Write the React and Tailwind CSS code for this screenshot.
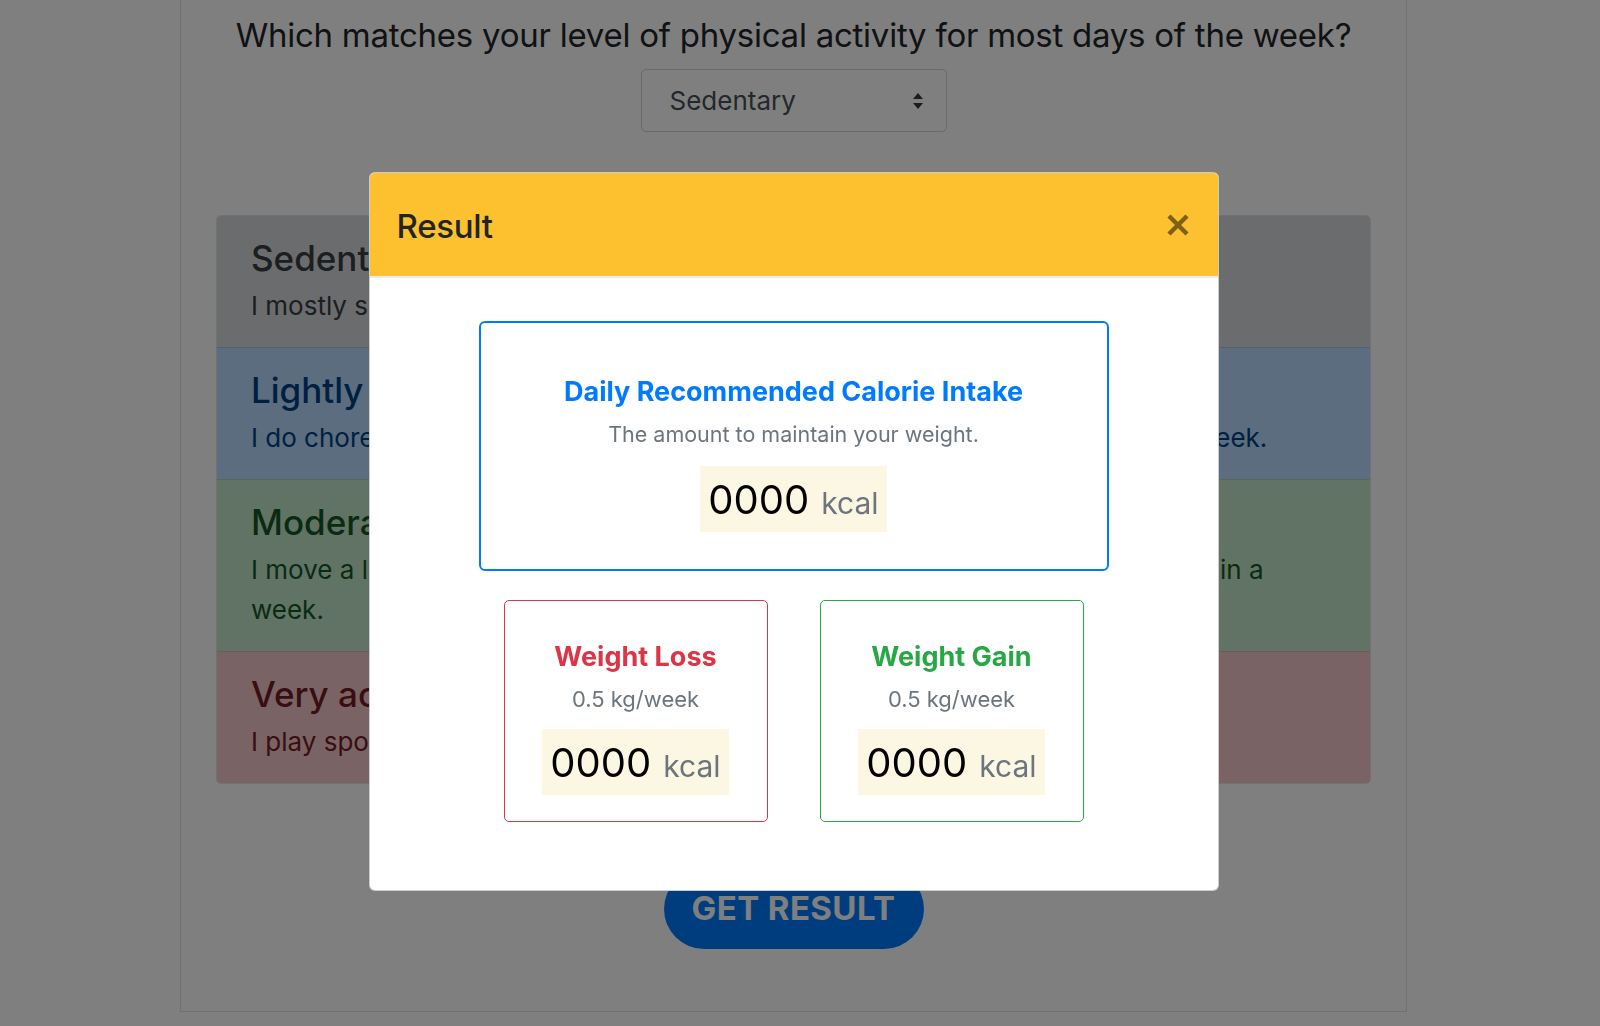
import React from 'react';

const levels = [
  {
    title: 'Sedentary',
    text: 'I mostly sit down throughout the day.',
    row: 'bg-[#d6d8db] text-[#383d41]',
  },
  {
    title: 'Lightly active',
    text: 'I do chores around the house and often go on light walks for 1 to 3 times in a week.',
    row: 'bg-[#b8daff] text-[#004085]',
  },
  {
    title: 'Moderately active',
    text: 'I move a lot during the day and do moderate exercises like jogging, 3 – 5 times in a',
    wrap: 'week.',
    row: 'bg-[#c3e6cb] text-[#155724]',
  },
  {
    title: 'Very active',
    text: 'I play sports or do intense exercise almost every day.',
    row: 'bg-[#f5c6cb] text-[#721c24]',
  },
];

const SelectArrows = () => (
  <svg width="12" height="18" viewBox="0 0 12 18">
    <path d="M6 1 L11 7 L1 7 Z M6 17 L1 11 L11 11 Z" fill="#343a40" />
  </svg>
);

const CloseIcon = () => (
  <svg width="24" height="24" viewBox="0 0 24 24">
    <path d="M3 3 L21 21 M21 3 L3 21" stroke="#000" strokeOpacity="0.5" strokeWidth="4.5" />
  </svg>
);

const Kcal = () => (
  <div className="inline-flex items-baseline h-[66px] bg-[#fcf7e3] px-[8px] pt-[14px]">
    <span className="text-[40px] leading-[40px] text-black">0000</span>
    <span className="ml-[12px] text-[30px] leading-[30px] text-[#6c757d]">kcal</span>
  </div>
);

const GoalCard = ({ title, border, color }) => (
  <div className={`w-[264px] h-[222px] rounded-[5px] border ${border} pt-[39px] flex flex-col items-center`}>
    <h5 className={`text-[27px] leading-[34px] font-bold ${color}`}>{title}</h5>
    <p className="mt-[10px] text-[22px] leading-[30px] text-[#6c757d]">0.5 kg/week</p>
    <div className="mt-[15px]">
      <Kcal />
    </div>
  </div>
);

export default function App() {
  return (
    <div className="relative min-h-[1026px] bg-white font-[Inter,sans-serif] pr-[13px]">
      <div className="ml-[180px] w-[1227px] border-x border-b border-[#dee2e6] px-[35px] pt-[15px] pb-[62px] flex flex-col items-center">
        <h2 className="text-[33px] leading-[40px] text-[#212529] tracking-[-0.25px]">
          Which matches your level of physical activity for most days of the week?
        </h2>

        <div className="mt-[14px] w-[306px] h-[63px] rounded-[5px] border border-[#ced4da] flex items-center justify-between pl-[28px] pr-[22px] text-[26px] text-[#495057]">
          <span>Sedentary</span>
          <SelectArrows />
        </div>

        <div className="mt-[83px] w-full rounded-[5px] border border-black/10 overflow-hidden">
          {levels.map((lvl, i) => (
            <div
              key={lvl.title}
              className={`${lvl.row} px-[34px] pt-[22px] pb-[21px] ${i > 0 ? 'border-t border-black/10' : ''}`}
            >
              <h4 className="text-[35px] leading-[41px] font-medium mb-[7px]">{lvl.title}</h4>
              <p className="text-[26px] leading-[40px]">
                {lvl.text}
                {lvl.wrap && (
                  <>
                    <br />
                    {lvl.wrap}
                  </>
                )}
              </p>
            </div>
          ))}
        </div>

        <button className="mt-[85px] w-[260px] h-[80px] rounded-full bg-[#007bff] text-white text-[33px] tracking-[0.4px] font-bold">
          GET RESULT
        </button>
      </div>

      <div className="fixed inset-0 bg-black/50 pr-[13px] flex justify-center items-start">
        <div className="mt-[172px] w-[850px] rounded-[6px] border border-black/20 bg-white overflow-hidden">
          <div className="h-[105px] bg-[#fdc02f] border-b-2 border-[#e9ecef] flex items-center justify-between pl-[27px] pr-[28px]">
            <h3 className="text-[33px] leading-[42px] font-medium text-[#212529] tracking-[-0.3px] pt-[2px]">Result</h3>
            <CloseIcon />
          </div>

          <div className="flex flex-col items-center pt-[43px] pb-[68px]">
            <div className="w-[630px] h-[250px] rounded-[6px] border-2 border-[#007bff] pt-[52px] flex flex-col items-center">
              <h5 className="text-[27px] leading-[34px] font-bold text-[#007bff]">Daily Recommended Calorie Intake</h5>
              <p className="mt-[10px] text-[21.5px] leading-[30px] text-[#6c757d]">The amount to maintain your weight.</p>
              <div className="mt-[17px]">
                <Kcal />
              </div>
            </div>

            <div className="mt-[29px] flex gap-[52px]">
              <GoalCard title="Weight Loss" border="border-[#dc3545]" color="text-[#dc3545]" />
              <GoalCard title="Weight Gain" border="border-[#28a745]" color="text-[#28a745]" />
            </div>
          </div>
        </div>
      </div>
    </div>
  );
}
